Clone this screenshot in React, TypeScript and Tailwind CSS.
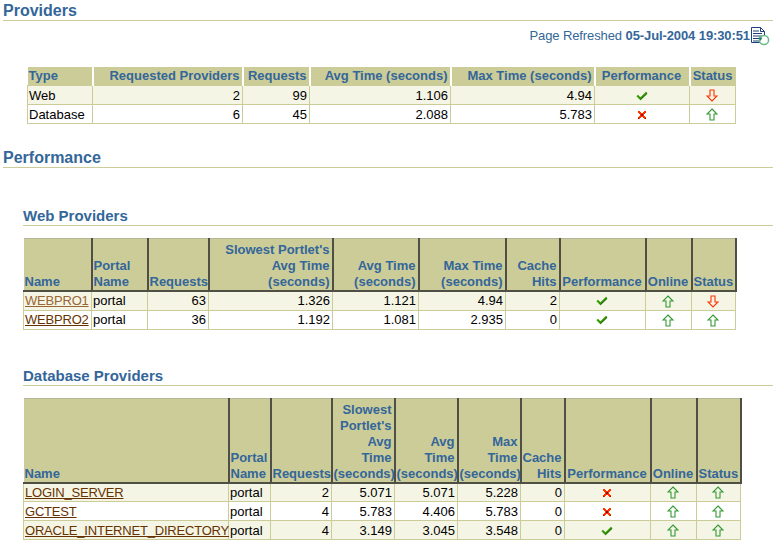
type Cell = string | { link: string; light?: boolean } | 'ok' | 'bad' | 'up' | 'down';
type Column = { title: string[]; width: number; align: 'left' | 'right' | 'center' };

function CheckIcon() {
  return (
    <svg viewBox="0 0 12 10" className="mx-auto block h-[10px] w-[12px]" aria-hidden="true">
      <path d="M1.2 4.6 4.4 7.8 10.8 1.6" fill="none" stroke="#339900" strokeWidth="2.1" />
      <path d="M4.4 8.8 11 2.6" fill="none" stroke="#115500" strokeWidth="0.8" />
    </svg>
  );
}

function CrossIcon() {
  return (
    <svg viewBox="0 0 10 10" className="mx-auto block h-[10px] w-[10px]" shapeRendering="crispEdges" aria-hidden="true">
      <path d="M1 1h2v1h1v1h2V2h1V1h2v2H8v1H7v2h1v1h1v2H7V8H6V7H4v1H3v1H1V7h1V6h1V4H2V3H1z" fill="#ff3300" />
      <path d="M4 4h2v2H4zM8 8h1v1H8zM1 8h1v1H1z" fill="#991100" />
    </svg>
  );
}

function ArrowIcon({ down }: { down?: boolean }) {
  const color = down ? '#ff3300' : '#339933';
  return (
    <svg viewBox="0 0 12 13" className="mx-auto block h-[13px] w-[12px]" aria-hidden="true">
      <path
        d={down ? 'M4 1h4v6h3l-5 5-5-5h3z' : 'M6 1l5 5H8v6H4V6H1z'}
        fill="none"
        stroke={color}
        strokeWidth="1.1"
      />
    </svg>
  );
}

function RefreshIcon() {
  return (
    <svg viewBox="0 0 20 20" className="h-[20px] w-[20px]" aria-hidden="true">
      <path d="M1.5 1.5h9l4 4v11h-13z" fill="#fff" stroke="#1f3f7f" strokeWidth="1" />
      <path d="M10.5 1.5v4h4" fill="none" stroke="#1f3f7f" strokeWidth="1" />
      <path d="M3 5h6M3 7.5h9M3 10h9M3 12.5h9M3 15h7" stroke="#1f3f7f" strokeWidth="1.2" />
      <circle cx="14" cy="14" r="4.6" fill="#fff" stroke="#66bb88" strokeWidth="1.5" />
      <path d="M8.5 11.5h4l-2 3.5z" fill="#228855" />
    </svg>
  );
}

function renderCell(cell: Cell) {
  if (cell === 'ok') return <CheckIcon />;
  if (cell === 'bad') return <CrossIcon />;
  if (cell === 'up') return <ArrowIcon />;
  if (cell === 'down') return <ArrowIcon down />;
  if (typeof cell === 'object') {
    return (
      <a className={`tracking-[-0.2px] underline ${cell.light ? 'text-[#996633]' : 'text-[#663300]'}`}>{cell.link}</a>
    );
  }
  return cell;
}

const alignClass = { left: 'text-left', right: 'text-right', center: 'text-center' };

function DataTable({ columns, rows, dark }: { columns: Column[]; rows: Cell[][]; dark?: boolean }) {
  const total = columns.reduce((sum, column) => sum + column.width, 0);
  return (
    <table className="table-fixed border-collapse" style={{ width: total }}>
      <colgroup>
        {columns.map((column) => (
          <col key={column.title.join(' ')} style={{ width: column.width }} />
        ))}
      </colgroup>
      <thead>
        <tr>
          {columns.map((column) => (
            <th
              key={column.title.join(' ')}
              className={`bg-[#cccc99] pr-[2px] pl-px align-bottom text-[13px] leading-[16px] font-bold whitespace-nowrap text-[#336699] ${alignClass[column.align]} ${
                dark
                  ? 'border-t border-r-2 border-b-2 border-t-[#b5b59a] border-r-[#4f4f45] border-b-[#4f4f45] pt-[3px] pb-0'
                  : 'border-r-2 border-r-white py-px last:border-r-0'
              }`}
            >
              {column.title.map((line) => (
                <div key={line}>{line}</div>
              ))}
            </th>
          ))}
        </tr>
      </thead>
      <tbody>
        {rows.map((row, rowIndex) => (
          <tr key={rowIndex} className={rowIndex % 2 === 0 ? 'bg-[#f5f5e6]' : 'bg-white'}>
            {row.map((cell, cellIndex) => (
              <td
                key={cellIndex}
                className={`h-[19px] border border-[#cccc99] pt-px pr-[2px] pb-0 pl-px text-[13px] leading-[16px] whitespace-nowrap text-black ${alignClass[columns[cellIndex].align]}`}
              >
                {renderCell(cell)}
              </td>
            ))}
          </tr>
        ))}
      </tbody>
    </table>
  );
}

const summaryColumns: Column[] = [
  { title: ['Type'], width: 65, align: 'left' },
  { title: ['Requested Providers'], width: 150, align: 'right' },
  { title: ['Requests'], width: 67, align: 'right' },
  { title: ['Avg Time (seconds)'], width: 141, align: 'right' },
  { title: ['Max Time (seconds)'], width: 144, align: 'right' },
  { title: ['Performance'], width: 95, align: 'center' },
  { title: ['Status'], width: 46, align: 'center' },
];

const webColumns: Column[] = [
  { title: ['Name'], width: 68, align: 'left' },
  { title: ['Portal', 'Name'], width: 56, align: 'left' },
  { title: ['Requests'], width: 61, align: 'right' },
  { title: ["Slowest Portlet's", 'Avg Time', '(seconds)'], width: 124, align: 'right' },
  { title: ['Avg Time', '(seconds)'], width: 86, align: 'right' },
  { title: ['Max Time', '(seconds)'], width: 87, align: 'right' },
  { title: ['Cache', 'Hits'], width: 54, align: 'right' },
  { title: ['Performance'], width: 86, align: 'center' },
  { title: ['Online'], width: 46, align: 'center' },
  { title: ['Status'], width: 44, align: 'center' },
];

const databaseColumns: Column[] = [
  { title: ['Name'], width: 205, align: 'left' },
  { title: ['Portal', 'Name'], width: 42, align: 'left' },
  { title: ['Requests'], width: 61, align: 'right' },
  { title: ['Slowest', "Portlet's", 'Avg', 'Time', '(seconds)'], width: 63, align: 'right' },
  { title: ['Avg', 'Time', '(seconds)'], width: 63, align: 'right' },
  { title: ['Max', 'Time', '(seconds)'], width: 63, align: 'right' },
  { title: ['Cache', 'Hits'], width: 44, align: 'right' },
  { title: ['Performance'], width: 86, align: 'center' },
  { title: ['Online'], width: 46, align: 'center' },
  { title: ['Status'], width: 44, align: 'center' },
];

export default function App() {
  return (
    <div className="h-[543px] w-[777px] overflow-hidden bg-white font-['Liberation_Sans',Arial,sans-serif]">
      <div className="w-[773px] pl-[3px]">
        <h1 className="border-b border-[#cccc99] pt-[2px] text-[16px] leading-[18px] font-bold text-[#336699]">
          Providers
        </h1>
        <div className="mt-[5px] flex items-center justify-end pr-[3px] text-[13px] leading-[20px] tracking-[-0.1px] text-[#336699]">
          <span>
            Page Refreshed <b>05-Jul-2004 19:30:51</b>
          </span>
          <RefreshIcon />
        </div>
        <div className="mt-[21px] ml-[24px]">
          <DataTable
            columns={summaryColumns}
            rows={[
              ['Web', '2', '99', '1.106', '4.94', 'ok', 'down'],
              ['Database', '6', '45', '2.088', '5.783', 'bad', 'up'],
            ]}
          />
        </div>
        <h1 className="mt-[23px] border-b border-[#cccc99] pt-[2px] text-[16px] leading-[18px] font-bold text-[#336699]">
          Performance
        </h1>
        <div className="ml-[20px]">
          <h2 className="mt-[39px] border-b border-[#cccc99] text-[15px] leading-[18px] font-bold text-[#336699]">
            Web Providers
          </h2>
          <div className="mt-[12px]">
            <DataTable
              columns={webColumns}
              rows={[
                [{ link: 'WEBPRO1', light: true }, 'portal', '63', '1.326', '1.121', '4.94', '2', 'ok', 'up', 'down'],
                [{ link: 'WEBPRO2' }, 'portal', '36', '1.192', '1.081', '2.935', '0', 'ok', 'up', 'up'],
              ]}
              dark
            />
          </div>
          <h2 className="mt-[37px] border-b border-[#cccc99] text-[15px] leading-[18px] font-bold text-[#336699]">
            Database Providers
          </h2>
          <div className="mt-[12px]">
            <DataTable
              columns={databaseColumns}
              rows={[
                [{ link: 'LOGIN_SERVER' }, 'portal', '2', '5.071', '5.071', '5.228', '0', 'bad', 'up', 'up'],
                [{ link: 'GCTEST' }, 'portal', '4', '5.783', '4.406', '5.783', '0', 'bad', 'up', 'up'],
                [{ link: 'ORACLE_INTERNET_DIRECTORY' }, 'portal', '4', '3.149', '3.045', '3.548', '0', 'ok', 'up', 'up'],
              ]}
              dark
            />
          </div>
        </div>
      </div>
    </div>
  );
}
